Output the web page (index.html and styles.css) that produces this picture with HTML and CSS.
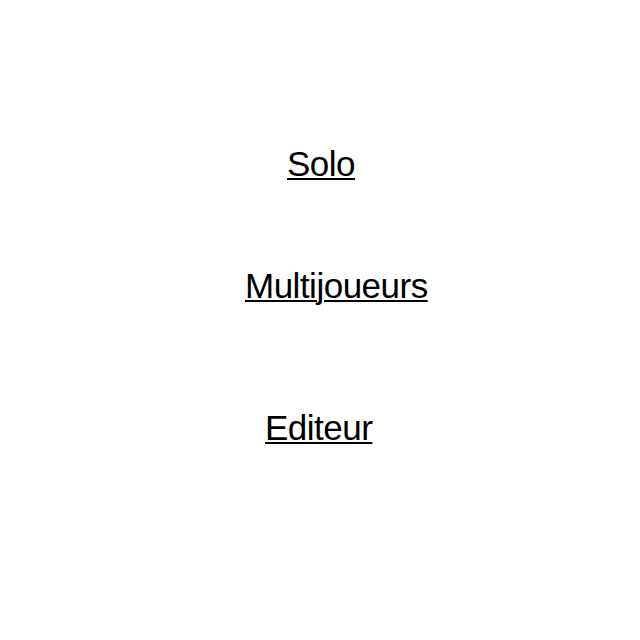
FILE: index.html
```html
<!DOCTYPE html>
<html lang="fr">
<head>
<meta charset="utf-8">
<title>Menu</title>
<link rel="stylesheet" href="styles.css">
</head>
<body>
<nav class="menu">
  <a class="menu-link solo" href="#">Solo</a>
  <a class="menu-link multi" href="#">Multijoueurs</a>
  <a class="menu-link editor" href="#">Editeur</a>
</nav>
</body>
</html>
```
FILE: styles.css
```css
html, body {
  margin: 0;
  padding: 0;
  background: #ffffff;
}

.menu {
  display: flex;
  flex-direction: column;
  align-items: flex-start;
  padding-top: 144px;
}

.menu-link {
  display: block;
  font-family: "Liberation Sans", Arial, sans-serif;
  font-size: 35px;
  line-height: 40px;
  letter-spacing: -0.5px;
  color: #000000;
  text-decoration: underline;
  text-decoration-thickness: 2px;
  text-underline-offset: 2px;
}

.solo {
  margin-left: 287px;
}

.multi {
  margin-left: 245px;
  margin-top: 82px;
}

.editor {
  margin-left: 265px;
  margin-top: 102px;
}
```
